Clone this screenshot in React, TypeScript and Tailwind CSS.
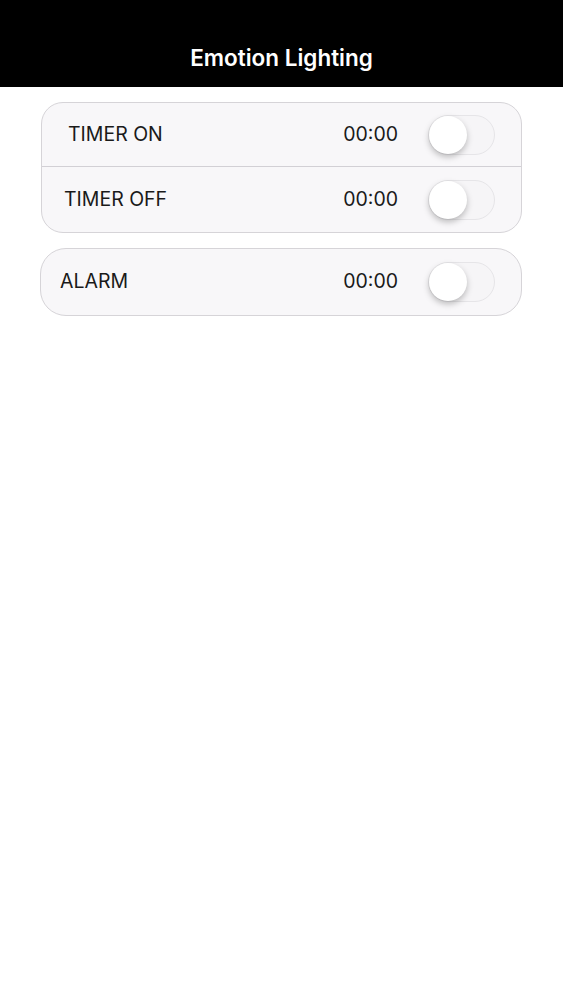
import React, { useState } from 'react';

interface RowProps {
  label: string;
  time: string;
  rowClass: string;
  divider?: boolean;
}

const Toggle: React.FC<{ on: boolean; onChange: () => void }> = ({ on, onChange }) => (
  <button
    onClick={onChange}
    className={`relative h-[40px] w-[67px] shrink-0 rounded-full border border-[#e6e5e8] ${
      on ? 'bg-[#4cd964]' : 'bg-[#f6f5f7]'
    }`}
  >
    <span
      className={`absolute top-[0px] h-[38px] w-[38px] rounded-full bg-white shadow-[0_3px_6px_rgba(0,0,0,0.25)] ${
        on ? 'left-[27px]' : 'left-[0px]'
      }`}
    />
  </button>
);

const Row: React.FC<RowProps> = ({ label, time, rowClass, divider }) => {
  const [on, setOn] = useState(false);
  return (
    <div
      className={`flex items-center pr-[26px] ${divider ? 'border-b border-[#d2d0d5]' : ''} ${rowClass}`}
    >
      <span className="flex-1 text-[19.5px] text-[#1a1a1a]">{label}</span>
      <span className="mr-[30px] text-[19.5px] text-[#1a1a1a]">{time}</span>
      <Toggle on={on} onChange={() => setOn(!on)} />
    </div>
  );
};

export default function App() {
  return (
    <div className="min-h-[1000px] bg-white font-['Inter',sans-serif]">
      {/* Header */}
      <div className="flex h-[87px] items-end justify-center bg-black pb-[12px]">
        <h1 className="text-[22.5px] font-semibold text-white">Emotion Lighting</h1>
      </div>

      <div className="flex flex-col gap-[15px] pt-[15px] pl-[41px] pr-[41px]">
        {/* Timer card */}
        <div className="overflow-hidden rounded-[22px] border border-[#d6d4d8] bg-[#f8f7f9]">
          <Row label="TIMER ON" time="00:00" rowClass="h-[64px] pl-[26px]" divider />
          <Row label="TIMER OFF" time="00:00" rowClass="h-[65px] pl-[22px]" />
        </div>

        {/* Alarm card */}
        <div className="-ml-px overflow-hidden rounded-[26px] border border-[#d6d4d8] bg-[#f8f7f9]">
          <Row label="ALARM" time="00:00" rowClass="h-[66px] pl-[19px]" />
        </div>
      </div>
    </div>
  );
}
